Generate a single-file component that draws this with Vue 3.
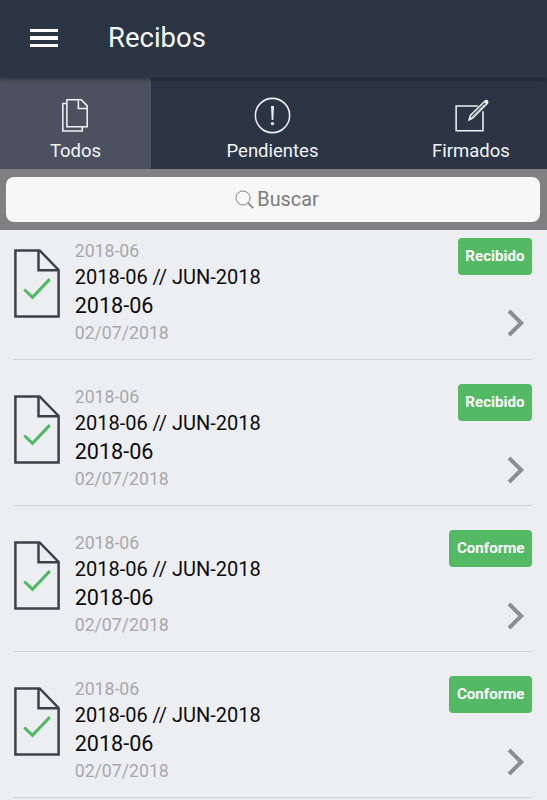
<template>
  <div class="app">
    <header class="header">
      <button class="menu" aria-label="Menú">
        <span></span>
        <span></span>
        <span></span>
      </button>
      <h1>Recibos</h1>
    </header>

    <nav class="tabs">
      <button
        v-for="tab in tabs"
        :key="tab.id"
        class="tab"
        :class="{ active: tab.id === activeTab }"
        @click="activeTab = tab.id"
      >
        <svg v-if="tab.id === 'todos'" class="tab-icon" viewBox="0 0 40 40">
          <path d="M10.8 8.2H7.6v26.9h19v-4" />
          <path d="M11.6 4.6h14l5.8 6v20.3H11.6z" />
          <path d="M22.8 5v8.1h8.3" />
        </svg>
        <svg v-else-if="tab.id === 'pendientes'" class="tab-icon" viewBox="0 0 40 40">
          <circle cx="20" cy="20" r="16.7" />
          <path class="solid" d="M18.6 10.8h2.8l-.6 13.7h-1.6z" />
          <circle class="solid" cx="20" cy="27.9" r="1.6" />
        </svg>
        <svg v-else class="tab-icon" viewBox="0 0 40 40">
          <path d="M26.2 10.7H5v24.2h26.2V15.8" />
          <path d="M17.7 24.2l1.2-4.2L33.2 5.9q1.4-.8 2.2 0t.1 2.3L21.4 22.4z" />
          <path d="M19.5 22.3L32.5 9.3" stroke-width=".8" />
          <path class="solid" d="M32 6.6l1.7-1.5q1.2-.5 2 .3t.2 2l-1.6 1.6zM17.3 24.7l.8-3.1 2 2z" />
        </svg>
        <span>{{ tab.label }}</span>
      </button>
    </nav>

    <div class="search">
      <label class="search-box">
        <svg viewBox="0 0 20 20">
          <circle cx="8" cy="8" r="7" />
          <path d="M13 13l5.3 5.2" />
        </svg>
        <span>Buscar</span>
      </label>
    </div>

    <ul class="list">
      <li v-for="item in receipts" :key="item.id" class="row">
        <svg class="doc" viewBox="0 0 46 70">
          <path d="M1.4 1.4h24.2l19 19.5v46.7H1.4z" />
          <path d="M24.5 1.8v19.4h19.8" />
          <path class="check" d="M10.3 40.5l8.2 7.8 17.3-18.2" />
        </svg>
        <div class="info">
          <p class="muted">{{ item.period }}</p>
          <p class="title">{{ item.title }}</p>
          <p class="name">{{ item.name }}</p>
          <p class="muted">{{ item.date }}</p>
        </div>
        <div class="side">
          <span class="badge">{{ item.status }}</span>
          <svg class="chevron" viewBox="0 0 18 28">
            <path d="M2 2l12.2 12L2 26" />
          </svg>
        </div>
      </li>
    </ul>
  </div>
</template>

<script setup>
import { ref } from 'vue'

const activeTab = ref('todos')

const tabs = [
  { id: 'todos', label: 'Todos' },
  { id: 'pendientes', label: 'Pendientes' },
  { id: 'firmados', label: 'Firmados' }
]

const statuses = ['Recibido', 'Recibido', 'Conforme', 'Conforme']

const receipts = ref(
  statuses.map((status, index) => ({
    id: index + 1,
    period: '2018-06',
    title: '2018-06 // JUN-2018',
    name: '2018-06',
    date: '02/07/2018',
    status
  }))
)
</script>

<style>
body {
  margin: 0;
  background: #edeef2;
}
</style>

<style scoped>
.app {
  height: 800px;
  overflow: hidden;
  background: #edeef2;
  font-family: Roboto, sans-serif;
}

button {
  border: 0;
  padding: 0;
  background: none;
  font: inherit;
  color: inherit;
}

.header {
  position: relative;
  display: flex;
  align-items: center;
  height: 78px;
  padding: 0 30px 3px;
  box-sizing: border-box;
  background: #2c3543;
  color: #f7fafc;
  box-shadow: 0 1px 5px rgba(0, 0, 0, 0.4);
}

.menu {
  display: flex;
  flex-direction: column;
  gap: 4px;
  width: 28px;
  margin: 1px 50px 0 0;
}

.menu span {
  height: 3.6px;
  background: #fff;
}

h1 {
  margin: 0;
  font-size: 27.5px;
  font-weight: 400;
  line-height: 34px;
}

.tabs {
  display: grid;
  grid-template-columns: 151px 243px 1fr;
  height: 91px;
  background: #2c3543;
}

.tab {
  display: flex;
  flex-direction: column;
  align-items: center;
  padding-top: 17px;
  color: #f1f4f8;
  font-size: 18.5px;
  line-height: 26px;
}

.tab:last-child {
  padding-left: 1px;
}

.tab.active {
  background: #4b515e;
  border-radius: 0 2px 2px 0;
}

.tab-icon {
  width: 41px;
  height: 41px;
  margin-bottom: 2px;
  fill: none;
  stroke: #eef2f8;
  stroke-width: 1.5;
}

.tab-icon .solid {
  fill: #eef2f8;
  stroke: none;
}

.search {
  height: 61px;
  padding: 8px 7px 8px 6px;
  box-sizing: border-box;
  background: #808080;
}

.search-box {
  display: flex;
  align-items: center;
  justify-content: center;
  gap: 2px;
  height: 45px;
  padding-left: 8px;
  border-radius: 8px;
  background: #f7f7f7;
  color: #7b7b7b;
  font-size: 19.8px;
}

.search-box svg {
  width: 20px;
  height: 20px;
  fill: none;
  stroke: #858585;
  stroke-width: 1;
}

.search-box svg path {
  stroke-width: 1.7;
}

.list {
  margin: 0;
  padding: 0 15px 0 13px;
  list-style: none;
}

.row {
  display: flex;
  align-items: flex-start;
  height: 146px;
  padding-top: 24px;
  box-sizing: border-box;
  border-bottom: 1px solid #d1d2d6;
}

.row:first-child {
  height: 130.4px;
  padding-top: 8px;
}

.doc {
  width: 46px;
  height: 70px;
  margin: 10.6px 15px 0 0.7px;
  fill: none;
  stroke: #3e4145;
  stroke-width: 2.5;
}

.doc .check {
  stroke: #50b963;
  stroke-width: 3;
}

.info {
  flex: 1;
}

.info p {
  margin: 0;
}

.info .muted {
  color: #a7a8ac;
  font-size: 17.7px;
  line-height: 26px;
}

.info .title {
  color: #0b0b0c;
  font-size: 20px;
  line-height: 27px;
}

.info .name {
  color: #0b0b0c;
  font-size: 21.6px;
  line-height: 29px;
}

.side {
  display: flex;
  flex-direction: column;
  align-items: flex-end;
}

.badge {
  padding: 0 7.5px;
  border-radius: 4px;
  background: #53b964;
  color: #fff;
  font-size: 15.1px;
  font-weight: 700;
  line-height: 37px;
}

.chevron {
  width: 18px;
  height: 28px;
  margin: 34.4px 7px 0 0;
  fill: none;
  stroke: #8c8d91;
  stroke-width: 4;
}
</style>
